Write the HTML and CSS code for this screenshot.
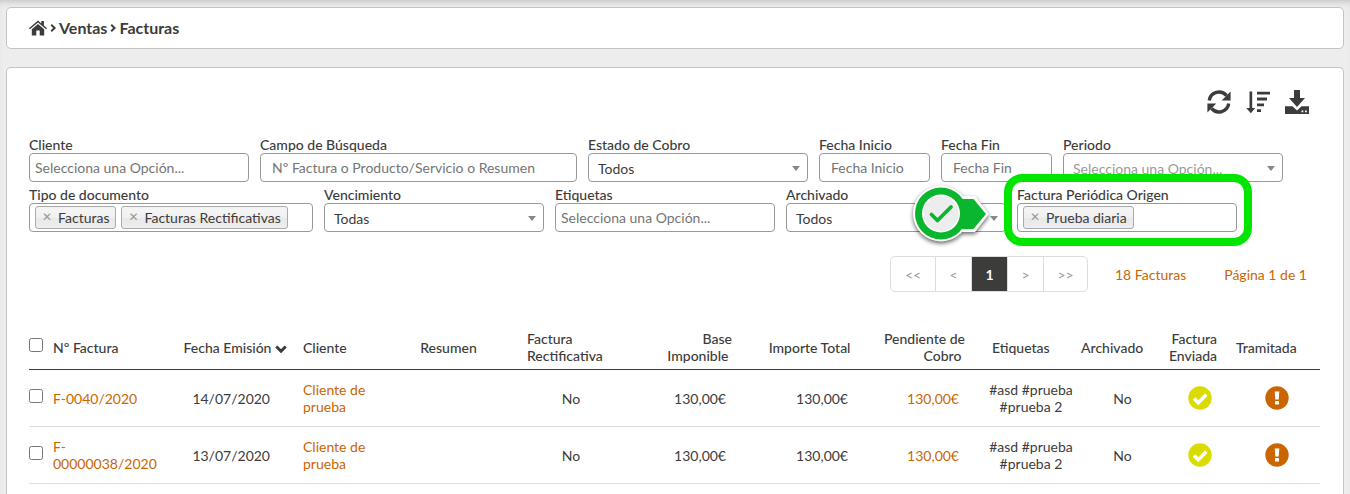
FILE: index.html
```html
<!DOCTYPE html>
<html lang="es">
<head>
<meta charset="utf-8">
<title>Facturas</title>
<link rel="stylesheet" href="styles.css">
</head>
<body>
<svg class="sprite" aria-hidden="true">
  <symbol id="ok" viewBox="0 0 24 24"><circle cx="12" cy="12" r="11.7" fill="#dadb00"/><path d="M6 12.5l4.3 4.3L18.3 8.6" fill="none" stroke="#fff" stroke-width="3.6"/></symbol>
  <symbol id="warn" viewBox="0 0 24 24"><circle cx="12" cy="12" r="11.7" fill="#cb6500"/><path d="M9.7 5.5h4.6l-.6 8h-3.4z" fill="#fff"/><rect x="10" y="15" width="4" height="3.6" rx=".5" fill="#fff"/></symbol>
</svg>

<nav class="crumbs" aria-label="Ruta">
  <a href="#" aria-label="Inicio"><svg class="home" viewBox="0 0 18 16"><path d="M0 8.3L9 .6l3.3 2.8V1h2.6v4.6L18 8.3l-.9 1L9 2.6.9 9.3z"/><path d="M9 4l6.2 5.2V15.500h-4.500V10.500H7.300v5H2.800V9.200z"/></svg></a>
  <svg class="sep" viewBox="0 0 6 8"><path d="M1.200 .8L4.600 4 1.200 7.200"/></svg>
  <a href="#">Ventas</a>
  <svg class="sep" viewBox="0 0 6 8"><path d="M1.200 .8L4.600 4 1.200 7.200"/></svg>
  <a href="#">Facturas</a>
</nav>

<main class="panel">
  <div class="tools">
    <button aria-label="Actualizar"><svg viewBox="0 0 24 24"><path d="M2.300 10.400A9.800 9.800 0 0 1 19.500 5.600M21.700 13.600A9.800 9.800 0 0 1 4.500 18.400" fill="none" stroke="#3c3c3b" stroke-width="3.400"/><path d="M23.600 1.500v8.900h-8.900zM.4 22.500v-8.900h8.900z"/></svg></button>
    <button aria-label="Ordenar"><svg viewBox="0 0 24 24"><path d="M3.500 1.500h2.700V18h3L4.900 23.300 .2 18h3.300zM11 1.800h13v2.800H11zM11 7.600h10v2.800H11zM11 13.400h7v2.800h-7zM11 19.200h4V22h-4z"/></svg></button>
    <button aria-label="Descargar"><svg viewBox="0 0 24 24"><path d="M9 0h6v8h5l-8 9-8-9h5zM0 16.200h7.500L12 20.600l4.500-4.400H24V24H0z"/><path d="M16.500 20.500h1.800v1.800h-1.800zM20 20.500h1.800v1.800H20z" fill="#fff"/></svg></button>
  </div>

  <form class="filters">
    <div class="field"><label for="cliente">Cliente</label><div class="box multi"><input id="cliente" type="text" placeholder="Selecciona una Opción..."></div></div>
    <div class="field wide"><label for="campo">Campo de Búsqueda</label><input class="box text" id="campo" type="text" placeholder="Nº Factura o Producto/Servicio o Resumen"></div>
    <div class="field"><label for="estado">Estado de Cobro</label><div class="drop"><select class="box" id="estado"><option>Todos</option></select></div></div>
    <div class="field date"><label for="inicio">Fecha Inicio</label><input class="box text" id="inicio" type="text" placeholder="Fecha Inicio"></div>
    <div class="field date"><label for="fin">Fecha Fin</label><input class="box text" id="fin" type="text" placeholder="Fecha Fin"></div>
    <div class="field"><label for="periodo">Periodo</label><div class="drop"><select class="box unset" id="periodo"><option>Selecciona una Opción...</option></select></div></div>
    <div class="field types"><label for="tipo">Tipo de documento</label><div class="box multi"><span class="chip"><button type="button" aria-label="Quitar Facturas">✕</button>Facturas</span><span class="chip"><button type="button" aria-label="Quitar Facturas Rectificativas">✕</button>Facturas Rectificativas</span><input id="tipo" type="text"></div></div>
    <div class="field"><label for="venc">Vencimiento</label><div class="drop"><select class="box" id="venc"><option>Todas</option></select></div></div>
    <div class="field"><label for="etiq">Etiquetas</label><div class="box multi"><input id="etiq" type="text" placeholder="Selecciona una Opción..."></div></div>
    <div class="field"><label for="arch">Archivado</label><div class="drop"><select class="box" id="arch"><option>Todos</option></select></div></div>
    <div class="field marked"><label for="origen">Factura Periódica Origen</label><div class="box multi"><span class="chip"><button type="button" aria-label="Quitar Prueba diaria">✕</button>Prueba diaria</span><input id="origen" type="text"></div>
      <svg class="pointer" viewBox="0 0 80 60" aria-hidden="true"><g class="lift"><path d="M44 12h19l14 18-14 18H44z" fill="#fff"/><circle cx="29" cy="29.500" r="28" fill="#fff"/></g><path d="M44 15h17.500L74 30 61.500 45H44z" fill="#0ab62d"/><circle cx="29" cy="29.500" r="26" fill="#0ab62d"/><circle cx="29" cy="29.500" r="19" fill="#fff"/><circle cx="29" cy="29.500" r="17.500" fill="#ededed"/><path d="M19.500 30.500l6 6L39 23" fill="none" stroke="#0ab62d" stroke-width="3.800" stroke-linecap="round" stroke-linejoin="round"/></svg>
    </div>
  </form>

  <div class="paging">
    <div class="pages"><button class="end">&lt;&lt;</button><button>&lt;</button><button class="current" aria-current="page">1</button><button>&gt;</button><button class="end">&gt;&gt;</button></div>
    <span>18 Facturas</span>
    <span>Página 1 de 1</span>
  </div>

  <table class="grid">
    <colgroup><col class="w24"><col class="w112"><col class="w122"><col class="w110"><col class="w103"><col class="w142"><col class="w100"><col class="w122"><col class="w111"><col class="w102"><col class="w83"><col class="w66"><col class="w94"></colgroup>
    <thead>
      <tr><th><input type="checkbox" aria-label="Seleccionar todas"></th><th>Nº Factura</th><th class="issued">Fecha Emisión <svg class="arrow" viewBox="0 0 12 8"><path d="M1.300 1.500L6 6.200l4.700-4.700"/></svg></th><th class="client">Cliente</th><th class="mid">Resumen</th><th class="rect">Factura Rectificativa</th><th class="sum">Base Imponible&nbsp;</th><th class="sum">Importe Total&nbsp;</th><th class="sum">Pendiente de Cobro&nbsp;</th><th class="tags">Etiquetas</th><th class="filed">Archivado</th><th class="sent">Factura Enviada</th><th class="done">Tramitada</th></tr>
    </thead>
    <tbody>
      <tr><td><input type="checkbox" aria-label="Seleccionar F-0040/2020"></td><td><a href="#">F-0040/2020</a></td><td class="issued">14/07/2020</td><td class="client"><a href="#">Cliente de prueba</a></td><td></td><td class="mid">No</td><td class="sum">130,00€</td><td class="sum">130,00€</td><td class="sum due">130,00€</td><td class="tags">#asd #prueba #prueba 2</td><td class="filed">No</td><td class="sent"><svg class="state" role="img" aria-label="Enviada"><use href="#ok"/></svg></td><td class="done"><svg class="state" role="img" aria-label="Pendiente"><use href="#warn"/></svg></td></tr>
      <tr><td><input type="checkbox" aria-label="Seleccionar F-00000038/2020"></td><td><a href="#">F-00000038/2020</a></td><td class="issued">13/07/2020</td><td class="client"><a href="#">Cliente de prueba</a></td><td></td><td class="mid">No</td><td class="sum">130,00€</td><td class="sum">130,00€</td><td class="sum due">130,00€</td><td class="tags">#asd #prueba #prueba 2</td><td class="filed">No</td><td class="sent"><svg class="state" role="img" aria-label="Enviada"><use href="#ok"/></svg></td><td class="done"><svg class="state" role="img" aria-label="Pendiente"><use href="#warn"/></svg></td></tr>
    </tbody>
  </table>
</main>
</body>
</html>
```
FILE: styles.css
```css
* { box-sizing: border-box; }
body {
  margin: 0;
  padding: 7px 6px 0;
  min-height: 100vh;
  display: flex;
  flex-direction: column;
  gap: 18px;
  background: #ededed;
  box-shadow: inset 0 6px 6px -4px #c4c4c4;
  color: #3c3c3b;
  font: 14px/17px Lato, sans-serif;
}
button, input, select { font: inherit; color: inherit; }
button { border: 0; padding: 0; background: none; cursor: pointer; }
a { color: #cb6500; text-decoration: none; }
svg { display: block; fill: currentColor; }
.sprite { position: absolute; width: 0; height: 0; }

.crumbs {
  display: flex;
  align-items: center;
  gap: 3px;
  padding: 11px 22px;
  border: 1px solid #c4c4c4;
  border-radius: 5px;
  background: #fff;
  font-weight: 700;
  font-size: 16px;
  line-height: 18px;
}
.crumbs a { color: inherit; }
.home { width: 18px; height: 16px; }
.sep { width: 6px; height: 8px; fill: none; stroke: currentColor; stroke-width: 2; }

.panel {
  flex: 1;
  padding: 22px 23px 0 22px;
  border: 1px solid #c4c4c4;
  border-bottom: 0;
  border-radius: 5px 5px 0 0;
  background: #fff;
}
.tools { display: flex; justify-content: flex-end; gap: 15px; padding-right: 11px; }
.tools svg { width: 24px; height: 24px; }

.filters { display: flex; flex-wrap: wrap; gap: 4px 11px; margin-top: 22px; }
.field { width: 220px; }
.field.wide { width: 317px; }
.field.date { width: 111px; }
.field.types { width: 284px; }
.field label { display: block; font-weight: 500; }
.box {
  display: block;
  width: 100%;
  height: 29px;
  border: 1px solid #999;
  border-radius: 4px;
  background: #fff;
}
.text { padding: 0 11px; }
.multi { display: flex; align-items: center; gap: 5px; padding: 0 5px; }
.multi input { flex: 1; min-width: 0; border: 0; padding: 0; background: none; }
input::placeholder { color: #757575; opacity: 1; }
.drop { position: relative; }
.drop select { appearance: none; padding: 1px 24px 0 9px; }
.drop select.unset { color: #999; }
.drop::after {
  content: "";
  position: absolute;
  right: 8px;
  top: 13px;
  border: 4px solid transparent;
  border-top: 5px solid #888;
  border-bottom: 0;
  pointer-events: none;
}
.chip {
  display: flex;
  align-items: center;
  gap: 6px;
  height: 23px;
  padding: 0 6px;
  border: 1px solid #aaa;
  border-radius: 3px;
  background: linear-gradient(#f4f4f4 20%, #f0f0f0 50%, #e8e8e8 52%, #eee);
  white-space: nowrap;
}
.chip button { color: #999; font: 12px/17px "DejaVu Sans", sans-serif; }

.marked { position: relative; }
.marked::after {
  content: "";
  position: absolute;
  inset: -12px -15px -14px -13px;
  border: 8px solid #00e600;
  border-radius: 18px;
  pointer-events: none;
}
.pointer { position: absolute; left: -105px; top: -2px; width: 80px; height: 60px; overflow: visible; }
.lift { filter: drop-shadow(0 2px 2px #0009); }

.paging { display: flex; justify-content: flex-end; align-items: center; gap: 38px; margin-top: 24px; padding-right: 13px; color: #cb6500; }
.pages { display: flex; border: 1px solid #ddd; border-radius: 5px; margin-right: -11px; overflow: hidden; }
.pages button { width: 36px; height: 34px; color: #999; }
.pages .end { width: 44px; }
.pages button + button { border-left: 1px solid #ddd; }
.pages .current { background: #3c3c3b; color: #fff; font-weight: 700; }

.grid { width: 100%; margin-top: 33px; border-collapse: collapse; table-layout: fixed; }
.grid th { padding: 5px 0; font-weight: 500; text-align: left; border-bottom: 1px solid #3c3c3b; }
.grid td { padding: 11px 0; border-bottom: 1px solid #ddd; }
.grid input { display: block; width: 14px; height: 14px; margin: 0 0 4px; }
.grid .issued { text-align: right; }
.grid td.issued { padding-right: 17px; }
.arrow { display: inline-block; width: 12px; height: 8px; fill: none; stroke: currentColor; stroke-width: 3; }
.grid .client { padding-left: 16px; }
.grid .mid { text-align: center; }
.grid .rect { padding-left: 27px; }
.grid .sum { text-align: right; padding-right: 10px; }
.grid td.sum { padding-right: 16px; }
.grid .due { color: #cb6500; }
.grid th.tags { padding-left: 17px; }
.grid td.tags { padding-left: 10px; text-align: center; }
.grid th.filed { padding-left: 4px; }
.grid td.filed { padding-left: 8px; text-align: center; }
.grid th.sent { padding-right: 9px; text-align: right; }
.grid td.sent { padding-left: 14px; }
.grid th.done { padding-left: 10px; }
.grid td.done { padding-left: 8px; }
.state { width: 24px; height: 24px; margin: 0 auto; }
.w24 { width: 24px; }
.w66 { width: 66px; }
.w83 { width: 83px; }
.w94 { width: 94px; }
.w100 { width: 100px; }
.w102 { width: 102px; }
.w103 { width: 103px; }
.w110 { width: 110px; }
.w111 { width: 111px; }
.w112 { width: 112px; }
.w122 { width: 122px; }
.w142 { width: 142px; }
```
